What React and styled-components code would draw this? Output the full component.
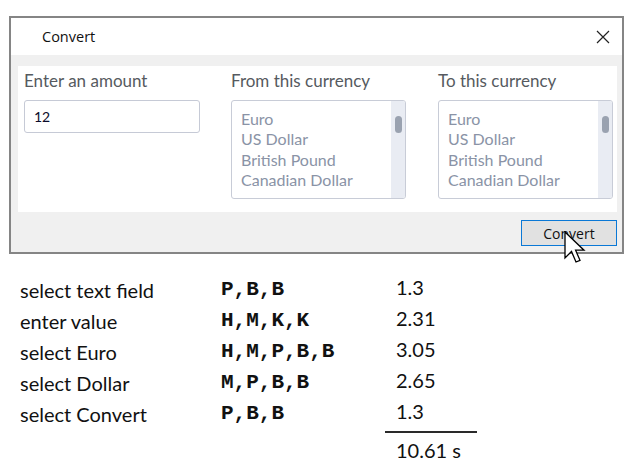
import React from "react"
import styled, { createGlobalStyle } from "styled-components"

const GlobalStyle = createGlobalStyle`
  html, body {
    margin: 0;
    padding: 0;
    background: #ffffff;
  }
`

const Page = styled.div`
  position: relative;
  width: 632px;
  height: 473px;
  padding-top: 16px;
  box-sizing: border-box;
  overflow: hidden;
`

const Window = styled.div`
  margin-left: 9px;
  width: 615px;
  height: 238px;
  box-sizing: border-box;
  border: 2px solid #858585;
  display: flex;
  flex-direction: column;
  background: #f0f0f0;
`

const TitleBar = styled.div`
  height: 37px;
  flex-shrink: 0;
  background: #ffffff;
  display: flex;
  align-items: center;
  justify-content: space-between;
  padding: 0 12px 0 31px;
  font-family: "Open Sans", "Noto Sans", sans-serif;
  font-size: 14.5px;
  color: #111;
`

const CloseIcon = styled.svg`
  width: 14px;
  height: 14px;
  display: block;
`

const Body = styled.div`
  flex: 1;
  padding: 11px 5px 0 7px;
  display: flex;
  flex-direction: column;
`

const Panel = styled.div`
  background: #ffffff;
  height: 146px;
  box-sizing: border-box;
  padding: 5px 4px 0 6px;
  display: grid;
  grid-template-columns: 207px 207px 175px;
  font-family: "Lato", "Open Sans", sans-serif;
`

const Field = styled.div`
  display: flex;
  flex-direction: column;
  gap: 9px;
`

const Label = styled.div`
  font-size: 17px;
  line-height: 20px;
  color: #565a60;
`

const AmountInput = styled.div`
  width: 176px;
  height: 33px;
  box-sizing: border-box;
  border: 1px solid #c6cad6;
  border-radius: 3px;
  padding-left: 9px;
  display: flex;
  align-items: center;
  font-size: 14px;
  color: #0b0b2a;
`

const ListBox = styled.div`
  width: 175px;
  height: 99px;
  box-sizing: border-box;
  border: 1px solid #c8ccd7;
  border-radius: 3px;
  display: flex;
  overflow: hidden;
`

const Options = styled.div`
  flex: 1;
  padding: 8px 0 0 9px;
  font-size: 16px;
  line-height: 20.4px;
  color: #8a93a6;
`

const ScrollTrack = styled.div`
  width: 14px;
  background: #e9ecf3;
  display: flex;
  justify-content: center;
  padding-top: 15px;
  box-sizing: border-box;
`

const ScrollThumb = styled.div`
  width: 7px;
  height: 17px;
  border-radius: 4px;
  background: #9aa2b0;
`

const Footer = styled.div`
  display: flex;
  justify-content: flex-end;
  padding-top: 8px;
`

const Button = styled.div`
  width: 96px;
  height: 26px;
  box-sizing: border-box;
  border: 1px solid #0a78d6;
  background: #e1e1e1;
  display: flex;
  align-items: center;
  justify-content: center;
  font-family: "Open Sans", "Noto Sans", sans-serif;
  font-size: 14px;
  color: #111;
`

const Cursor = styled.svg`
  position: absolute;
  left: 564px;
  top: 231px;
  width: 22px;
  height: 34px;
`

const Table = styled.div`
  margin-top: 20px;
  padding-left: 20px;
  display: grid;
  grid-template-columns: 201px 164px 100px;
  grid-auto-rows: 31px;
  font-family: "Lato", "Open Sans", sans-serif;
  font-size: 20px;
  color: #111;
`

const Step = styled.div`
  display: flex;
  align-items: center;
`

const Ops = styled.div`
  display: flex;
  align-items: center;
  font-family: "Liberation Mono", "Courier New", monospace;
  font-weight: bold;
  font-size: 21px;
  color: #111;
`

const Time = styled.div`
  display: flex;
  align-items: center;
  padding: 0 0 6px 11px;
  box-sizing: border-box;
`

const TotalCell = styled.div`
  grid-column: 3;
  width: 92px;
  box-sizing: border-box;
  margin-top: 2px;
  border-top: 2px solid #2a2a2a;
  padding: 5px 0 0 11px;
  line-height: 24px;
  white-space: nowrap;
`

const currencies = ["Euro", "US Dollar", "British Pound", "Canadian Dollar"]

const steps = [
  { name: "select text field", ops: "P,B,B", time: "1.3" },
  { name: "enter value", ops: "H,M,K,K", time: "2.31" },
  { name: "select Euro", ops: "H,M,P,B,B", time: "3.05" },
  { name: "select Dollar", ops: "M,P,B,B", time: "2.65" },
  { name: "select Convert", ops: "P,B,B", time: "1.3" },
]

const CurrencyList = () => (
  <ListBox>
    <Options>
      {currencies.map((c) => (
        <div key={c}>{c}</div>
      ))}
    </Options>
    <ScrollTrack>
      <ScrollThumb />
    </ScrollTrack>
  </ListBox>
)

const App = () => {
  return (
    <Page>
      <GlobalStyle />
      <Window>
        <TitleBar>
          <span>Convert</span>
          <CloseIcon viewBox="0 0 14 14">
            <path d="M1 1 L13 13 M13 1 L1 13" stroke="#222" strokeWidth="1.2" fill="none" />
          </CloseIcon>
        </TitleBar>
        <Body>
          <Panel>
            <Field>
              <Label>Enter an amount</Label>
              <AmountInput>12</AmountInput>
            </Field>
            <Field>
              <Label>From this currency</Label>
              <CurrencyList />
            </Field>
            <Field>
              <Label>To this currency</Label>
              <CurrencyList />
            </Field>
          </Panel>
          <Footer>
            <Button>Convert</Button>
          </Footer>
        </Body>
      </Window>

      <Cursor viewBox="0 0 22 34">
        <path
          d="M1 1 L1 27 L7.5 20.5 L12 31 L16 29.3 L11.6 19.2 L20 19.2 Z"
          fill="#ffffff"
          stroke="#000"
          strokeWidth="1.3"
          strokeLinejoin="miter"
        />
      </Cursor>

      <Table>
        {steps.map((s) => (
          <React.Fragment key={s.name}>
            <Step>{s.name}</Step>
            <Ops>{s.ops}</Ops>
            <Time>{s.time}</Time>
          </React.Fragment>
        ))}
        <TotalCell>10.61 s</TotalCell>
      </Table>
    </Page>
  )
}

export default App
